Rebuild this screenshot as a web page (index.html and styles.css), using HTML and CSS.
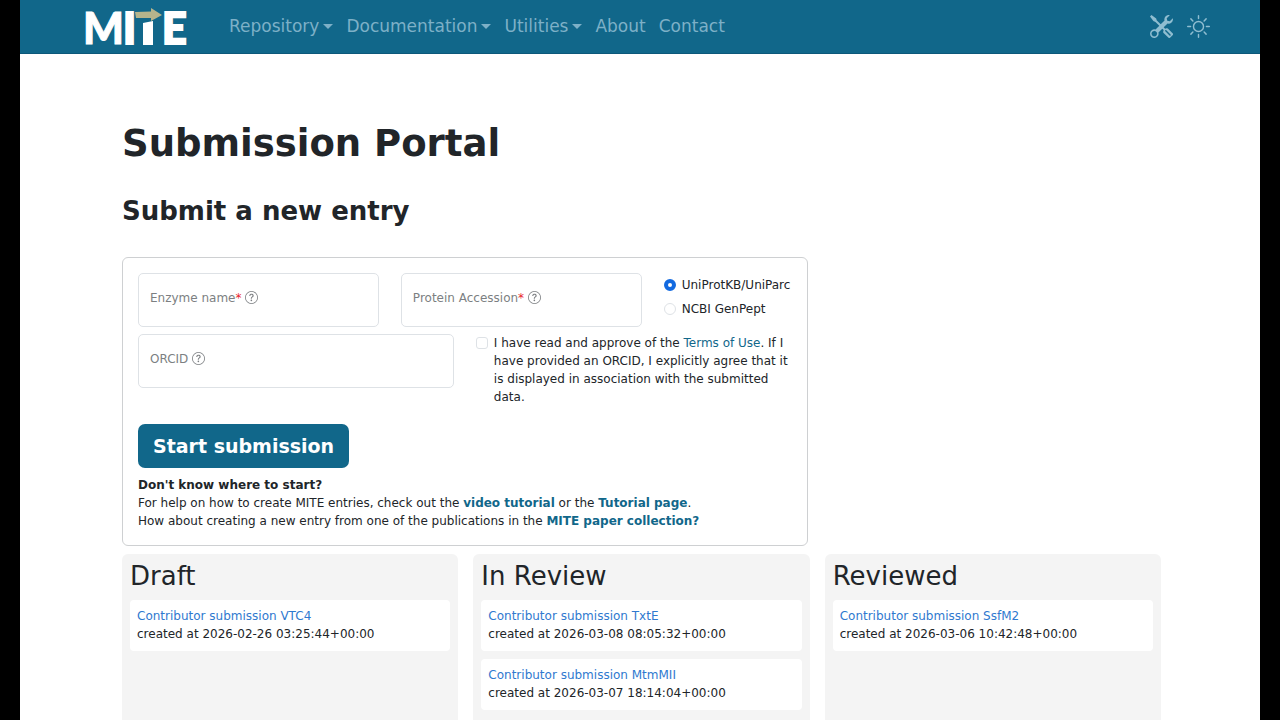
FILE: index.html
```html
<!DOCTYPE html>
<html lang="en">
<head>
<meta charset="utf-8">
<meta name="viewport" content="width=device-width, initial-scale=1">
<title>MITE - Submission Portal</title>
<link rel="stylesheet" href="styles.css">
</head>
<body>
<svg class="sprite" aria-hidden="true">
  <symbol id="question" viewBox="0 0 16 16">
    <path d="M8 15A7 7 0 1 1 8 1a7 7 0 0 1 0 14m0 1A8 8 0 1 0 8 0a8 8 0 0 0 0 16"/>
    <path d="M5.255 5.786a.237.237 0 0 0 .241.247h.825c.138 0 .248-.113.266-.25.09-.656.54-1.134 1.342-1.134.686 0 1.314.343 1.314 1.168 0 .635-.374.927-.965 1.371-.673.489-1.206 1.06-1.168 1.987l.003.217a.25.25 0 0 0 .25.246h.811a.25.25 0 0 0 .25-.25v-.105c0-.718.273-.927 1.01-1.486.609-.463 1.244-.977 1.244-2.056 0-1.511-1.276-2.241-2.673-2.241-1.267 0-2.655.59-2.75 2.286m1.557 5.763c0 .533.425.927 1.01.927.609 0 1.028-.394 1.028-.927 0-.552-.42-.94-1.029-.94-.584 0-1.009.388-1.009.94"/>
  </symbol>
</svg>
<div class="page">
  <header class="navbar">
    <a class="brand" href="#" aria-label="MITE home">
      <svg class="logo" width="104" height="40" viewBox="0 0 104 40">
        <text class="logo-text thin" x="-2" y="38">M</text>
        <text class="logo-text" x="38" y="38">I</text>
        <text class="logo-text" x="77" y="38">E</text>
        <path class="logo-stem" d="M58 17 68 15V39H58z"/>
        <path class="logo-arrow" d="M50 6 66 5.500V2L77 9 66 15V12L51 12z"/>
      </svg>
    </a>
    <nav class="menu">
      <button class="menu-item dropdown" type="button">Repository</button>
      <button class="menu-item dropdown" type="button">Documentation</button>
      <button class="menu-item dropdown" type="button">Utilities</button>
      <a class="menu-item" href="#">About</a>
      <a class="menu-item" href="#">Contact</a>
    </nav>
    <div class="tools">
      <button class="icon-button" type="button" aria-label="Tools">
        <svg class="nav-icon" viewBox="0 0 16 16"><path d="M1 0 0 1l2.2 3.081a1 1 0 0 0 .815.419h.07a1 1 0 0 1 .708.293l2.675 2.675-2.617 2.654A3.003 3.003 0 0 0 0 13a3 3 0 1 0 5.878-.851l2.654-2.617.968.968-.305.914a1 1 0 0 0 .242 1.023l3.27 3.27a.997.997 0 0 0 1.414 0l1.586-1.586a.997.997 0 0 0 0-1.414l-3.27-3.27a1 1 0 0 0-1.023-.242L10.5 9.5l-.96-.96 2.68-2.643A3.005 3.005 0 0 0 16 3q0-.405-.102-.777l-2.14 2.141L12 4l-.364-1.757L13.777.102a3 3 0 0 0-3.675 3.68L7.462 6.46 4.793 3.793a1 1 0 0 1-.293-.707v-.071a1 1 0 0 0-.419-.814zm9.646 10.646a.5.5 0 0 1 .708 0l2.914 2.915a.5.5 0 0 1-.707.707l-2.915-2.914a.5.5 0 0 1 0-.708M3 11l.471.242.529.026.287.445.445.287.026.529L5 13l-.242.471-.026.529-.445.287-.287.445-.529.026L3 15l-.471-.242L2 14.732l-.287-.445L1.268 14l-.026-.529L1 13l.242-.471.026-.529.445-.287.287-.445.529-.026z"/></svg>
      </button>
      <button class="icon-button" type="button" aria-label="Light mode">
        <svg class="nav-icon sun" viewBox="0 0 16 16"><circle cx="8" cy="8" r="3.500"/><path d="M8 .5v2M8 13.500v2M.5 8h2M13.500 8h2M2.700 2.700l1.400 1.400M11.900 11.900l1.400 1.400M2.700 13.300l1.400-1.400M11.900 4.100l1.400-1.400"/></svg>
      </button>
    </div>
  </header>

  <main class="content">
    <h1 class="title">Submission Portal</h1>
    <h2 class="subtitle">Submit a new entry</h2>

    <form class="entry-form">
      <div class="row row-protein">
        <div class="field">
          <input class="text-input" id="enzyme" type="text" required>
          <label class="field-label" for="enzyme">Enzyme name<span class="required">*</span> <svg class="help"><use href="#question"/></svg></label>
        </div>
        <div class="field">
          <input class="text-input" id="accession" type="text" required>
          <label class="field-label" for="accession">Protein Accession<span class="required">*</span> <svg class="help"><use href="#question"/></svg></label>
        </div>
        <div class="radios">
          <label class="choice"><input class="radio" type="radio" name="db" checked>UniProtKB/UniParc</label>
          <label class="choice"><input class="radio" type="radio" name="db">NCBI GenPept</label>
        </div>
      </div>
      <div class="row row-person">
        <div class="field">
          <input class="text-input" id="orcid" type="text">
          <label class="field-label" for="orcid">ORCID <svg class="help"><use href="#question"/></svg></label>
        </div>
        <div class="consent">
          <input class="checkbox" id="terms" type="checkbox">
          <label for="terms">I have read and approve of the <a class="link" href="#">Terms of Use</a>. If I have provided an ORCID, I explicitly agree that it is displayed in association with the submitted data.</label>
        </div>
      </div>
      <button class="submit" type="submit">Start submission</button>
      <p class="hint"><strong>Don't know where to start?</strong><br>
      For help on how to create MITE entries, check out the <a class="link strong" href="#">video tutorial</a> or the <a class="link strong" href="#">Tutorial page</a>.<br>
      How about creating a new entry from one of the publications in the <a class="link strong" href="#">MITE paper collection?</a></p>
    </form>

    <div class="board">
      <section class="column">
        <h3 class="column-title">Draft</h3>
        <article class="card"><a class="card-link" href="#">Contributor submission VTC4</a><span>created at 2026-02-26 03:25:44+00:00</span></article>
      </section>
      <section class="column">
        <h3 class="column-title">In Review</h3>
        <article class="card"><a class="card-link" href="#">Contributor submission TxtE</a><span>created at 2026-03-08 08:05:32+00:00</span></article>
        <article class="card"><a class="card-link" href="#">Contributor submission MtmMII</a><span>created at 2026-03-07 18:14:04+00:00</span></article>
      </section>
      <section class="column">
        <h3 class="column-title">Reviewed</h3>
        <article class="card"><a class="card-link" href="#">Contributor submission SsfM2</a><span>created at 2026-03-06 10:42:48+00:00</span></article>
      </section>
    </div>
  </main>
</div>
</body>
</html>
```
FILE: styles.css
```css
* { box-sizing: border-box; }

html { height: 100%; }

body {
  height: 100%;
  margin: 0;
  padding: 0 20px;
  overflow: hidden;
  background: #000;
  color: #212529;
  font-family: "DejaVu Sans", sans-serif;
  font-size: 12px;
  line-height: 18px;
}

h1, h2, h3, p { margin: 0; }

button {
  font-family: inherit;
  cursor: pointer;
}

.sprite {
  position: absolute;
  width: 0;
  height: 0;
}

.page {
  display: flex;
  flex-direction: column;
  min-height: 100%;
  background: #fff;
}

.navbar {
  display: flex;
  align-items: center;
  height: 54px;
  padding: 0 50px 1px 65px;
  background: #11678a;
  border-bottom: 1px solid #0d587a;
}

.brand {
  display: flex;
  margin-right: 40px;
}

.logo {
  display: block;
  overflow: visible;
}

.logo-text {
  fill: #fff;
  stroke: #fff;
  stroke-width: 2px;
  font-family: Lato, sans-serif;
  font-size: 43px;
  font-weight: 900;
}

.thin { stroke-width: 1px; }

.logo-stem { fill: #fff; }
.logo-arrow { fill: #b5b48c; }

.menu {
  display: flex;
  gap: 13px;
}

.menu-item {
  display: flex;
  align-items: center;
  padding: 0;
  border: 0;
  background: none;
  color: #7db0c7;
  font-size: 17px;
  line-height: 26px;
  text-decoration: none;
}

.dropdown::after {
  content: "";
  margin-left: 4px;
  border: 5px solid transparent;
  border-top-color: currentColor;
  border-bottom: 0;
}

.tools {
  display: flex;
  gap: 14px;
  margin-left: auto;
}

.icon-button {
  display: flex;
  padding: 0;
  border: 0;
  background: none;
  color: #8fbdd0;
}

.nav-icon {
  width: 23px;
  height: 23px;
  fill: currentColor;
}

.sun {
  fill: none;
  stroke: currentColor;
  stroke-linecap: round;
}

.content {
  display: flex;
  flex: 1;
  flex-direction: column;
  padding: 67px 99px 0 102px;
}

.title {
  font-size: 37px;
  line-height: 46px;
}

.subtitle {
  margin-top: 28px;
  font-size: 26px;
  line-height: 32px;
}

.entry-form {
  width: 66%;
  margin-top: 30px;
  padding: 15px;
  border: 1px solid #ced0d2;
  border-radius: 6px;
}

.row { display: grid; }

.row-protein {
  grid-template-columns: 1fr 1fr 128px;
  gap: 22px;
}

.row-person {
  grid-template-columns: 1fr 1fr;
  gap: 22px;
  margin-top: 7px;
}

.field {
  position: relative;
  height: 54px;
}

.text-input {
  width: 100%;
  height: 100%;
  padding: 12px;
  border: 1px solid #dee2e6;
  border-radius: 5px;
  background: #fff;
  font: inherit;
}

.field-label {
  position: absolute;
  top: 16px;
  left: 12px;
  color: #7c7f82;
}

.required { color: #e8262d; }

.help {
  width: 13px;
  height: 13px;
  vertical-align: -2px;
  fill: currentColor;
}

.radios {
  display: flex;
  flex-direction: column;
  gap: 6px;
  padding-top: 3px;
}

.choice {
  display: flex;
  align-items: center;
  gap: 6px;
  white-space: nowrap;
}

.radio,
.checkbox {
  flex: none;
  appearance: none;
  width: 12px;
  height: 12px;
  margin: 0;
  border: 1px solid #dee2e6;
  background: #fff;
}

.radio { border-radius: 50%; }
.radio:checked { border: 4px solid #136ae0; }
.checkbox {
  margin-top: 3px;
  border-radius: 3px;
}

.consent {
  display: flex;
  align-items: flex-start;
  gap: 6px;
}

.link {
  color: #11678a;
  text-decoration: none;
}

.strong { font-weight: bold; }

.submit {
  margin-top: 18px;
  padding: 8px 15px;
  border: 0;
  border-radius: 7px;
  background: #11678a;
  color: #fff;
  font-size: 19px;
  font-weight: bold;
  line-height: 28px;
}

.hint { margin-top: 8px; }

.board {
  display: grid;
  flex: 1;
  grid-template-columns: repeat(3, 1fr);
  gap: 15px;
  margin-top: 8px;
}

.column {
  padding: 6px 8px;
  border-radius: 6px 6px 0 0;
  background: #f4f4f4;
}

.column-title {
  font-size: 26px;
  font-weight: normal;
  line-height: 32px;
}

.card {
  display: flex;
  flex-direction: column;
  margin-top: 8px;
  padding: 7px 7px 8px;
  border-radius: 4px;
  background: #fff;
}

.card-link {
  color: #2f79cf;
  text-decoration: none;
}
```
